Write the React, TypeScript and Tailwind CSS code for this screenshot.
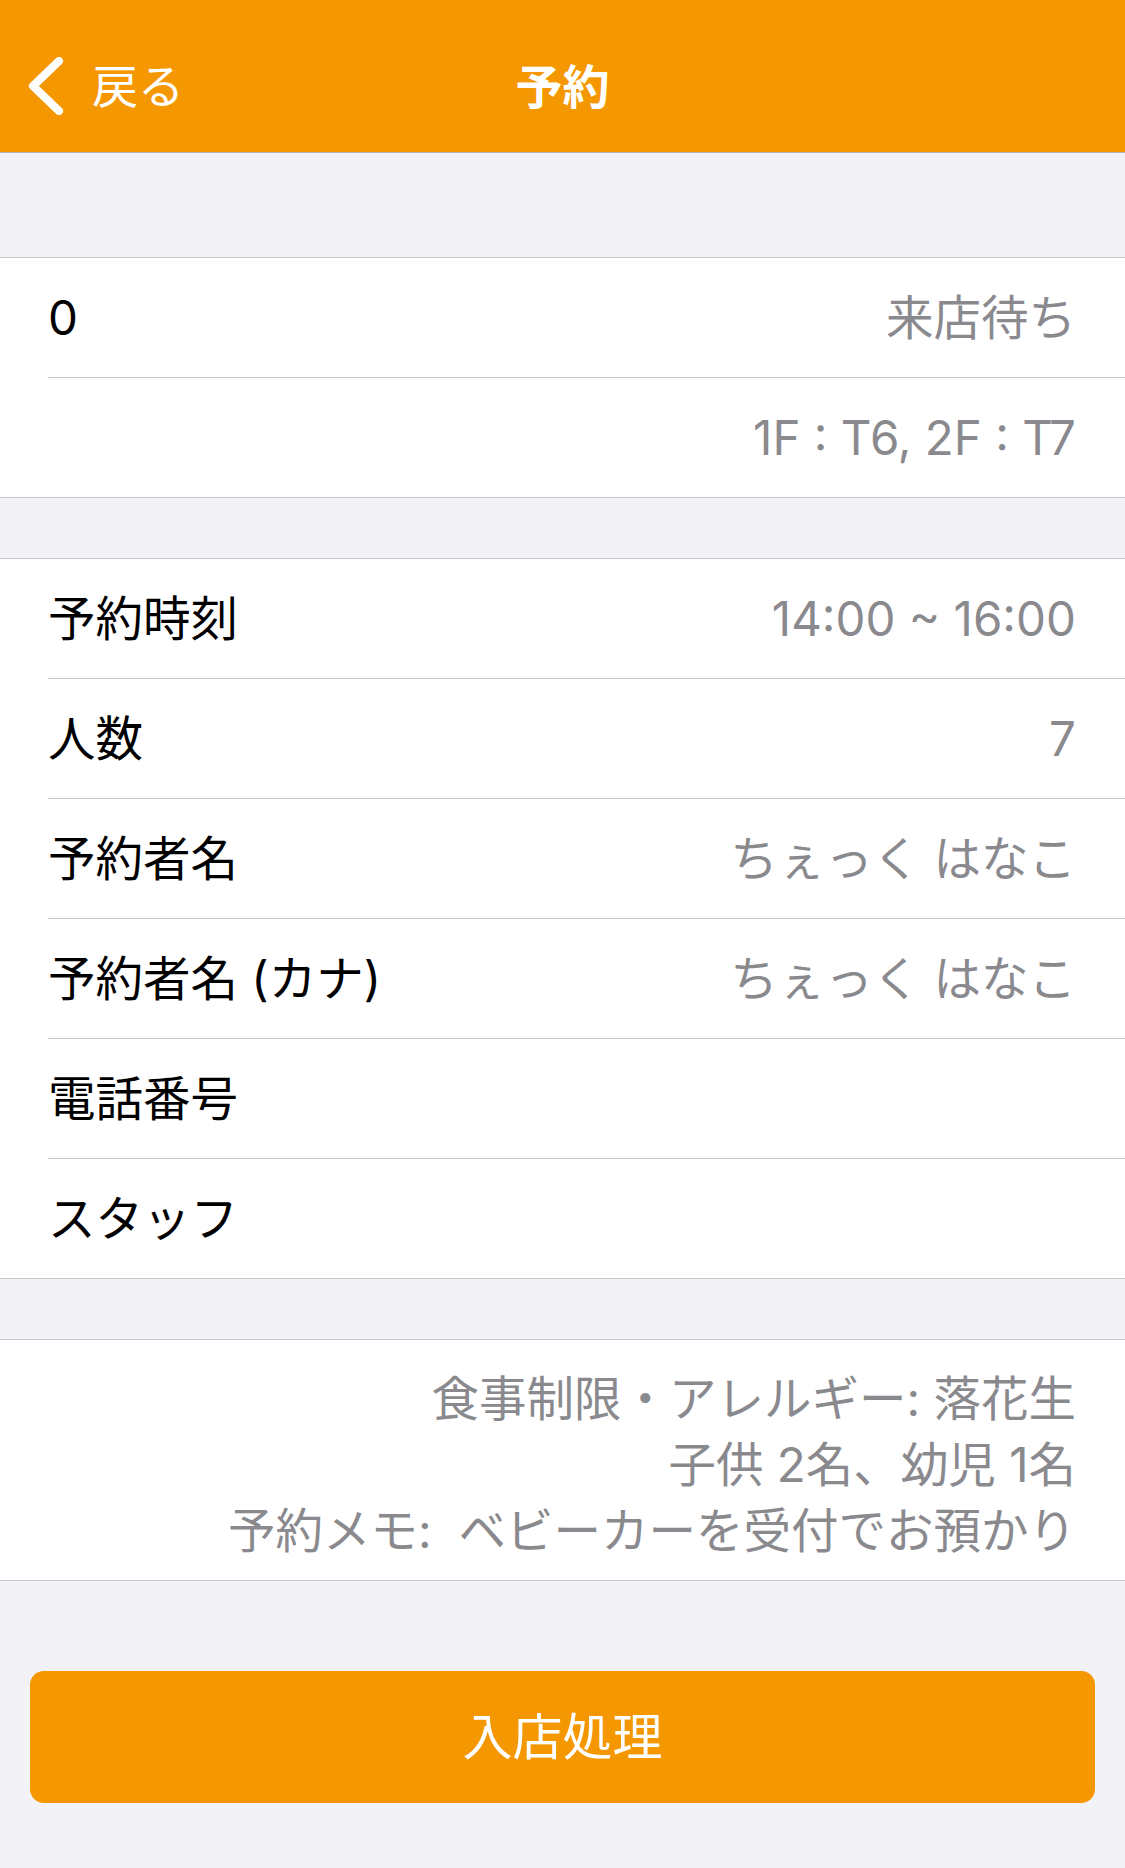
import React from "react";

const FONT = "font-['Inter','Noto_Sans_CJK_JP',sans-serif]";

interface Row {
  label: string;
  value?: string;
}

const rows: Row[] = [
  { label: "予約時刻", value: "14:00 ~ 16:00" },
  { label: "人数", value: "7" },
  { label: "予約者名", value: "ちぇっく はなこ" },
  { label: "予約者名 (カナ)", value: "ちぇっく はなこ" },
  { label: "電話番号" },
  { label: "スタッフ" },
];

const Divider = () => <div className="ml-[48px] h-px bg-[#c8c7cc]" />;

const App: React.FC = () => {
  return (
    <div className={`min-h-[1868px] w-[1125px] bg-[#f2f2f7] ${FONT}`}>
      {/* ヘッダー */}
      <div className="relative flex h-[153px] items-center border-b border-[#b4b4b4] bg-[#f49700] text-white">
        <div className="flex items-center pl-[26px] pt-[20px]">
          <svg width="38" height="58" viewBox="0 0 38 58" fill="none">
            <path d="M33 4 L7 29 L33 54" stroke="white" strokeWidth="8" strokeLinecap="round" strokeLinejoin="round" />
          </svg>
          <span className="ml-[28px] text-[46px] leading-none">戻る</span>
        </div>
        <div className="absolute inset-x-0 top-0 flex h-full items-center justify-center pt-[20px] pointer-events-none">
          <span className="text-[47px] font-semibold leading-none">予約</span>
        </div>
      </div>

      <div className="h-[104px]" />

      {/* ステータス */}
      <div className="border-y border-[#c8c7cc] bg-white">
        <div className="flex h-[119px] items-center justify-between pl-[48px] pr-[49px] text-[47.5px]">
          <span className="text-black">0</span>
          <span className="text-[#8a8a8e]">来店待ち</span>
        </div>
        <Divider />
        <div className="flex h-[119px] items-center justify-end pl-[48px] pr-[49px] text-[47.5px]">
          <span className="text-[#8a8a8e]">1F : T6, 2F : T7</span>
        </div>
      </div>

      <div className="h-[60px]" />

      {/* 予約詳細 */}
      <div className="border-y border-[#c8c7cc] bg-white">
        {rows.map((row, i) => (
          <div key={row.label}>
            {i > 0 && <Divider />}
            <div className="flex h-[119px] items-center justify-between pl-[48px] pr-[49px] text-[47.5px]">
              <span className="text-black">{row.label}</span>
              {row.value && <span className="text-[#8a8a8e]">{row.value}</span>}
            </div>
          </div>
        ))}
      </div>

      <div className="h-[60px]" />

      {/* メモ */}
      <div className="border-y border-[#c8c7cc] bg-white pb-[16px] pl-[48px] pr-[49px] pt-[26px] text-right text-[47.5px] leading-[66px] text-[#8a8a8e]">
        <div>食事制限・アレルギー: 落花生</div>
        <div>子供 2名、幼児 1名</div>
        <div>予約メモ:&nbsp;&nbsp;ベビーカーを受付でお預かり</div>
      </div>

      <div className="px-[30px] pt-[90px]">
        <button className="flex h-[132px] w-full items-center justify-center rounded-[14px] bg-[#f49700] text-[50px] text-white">
          入店処理
        </button>
      </div>
    </div>
  );
};

export default App;
